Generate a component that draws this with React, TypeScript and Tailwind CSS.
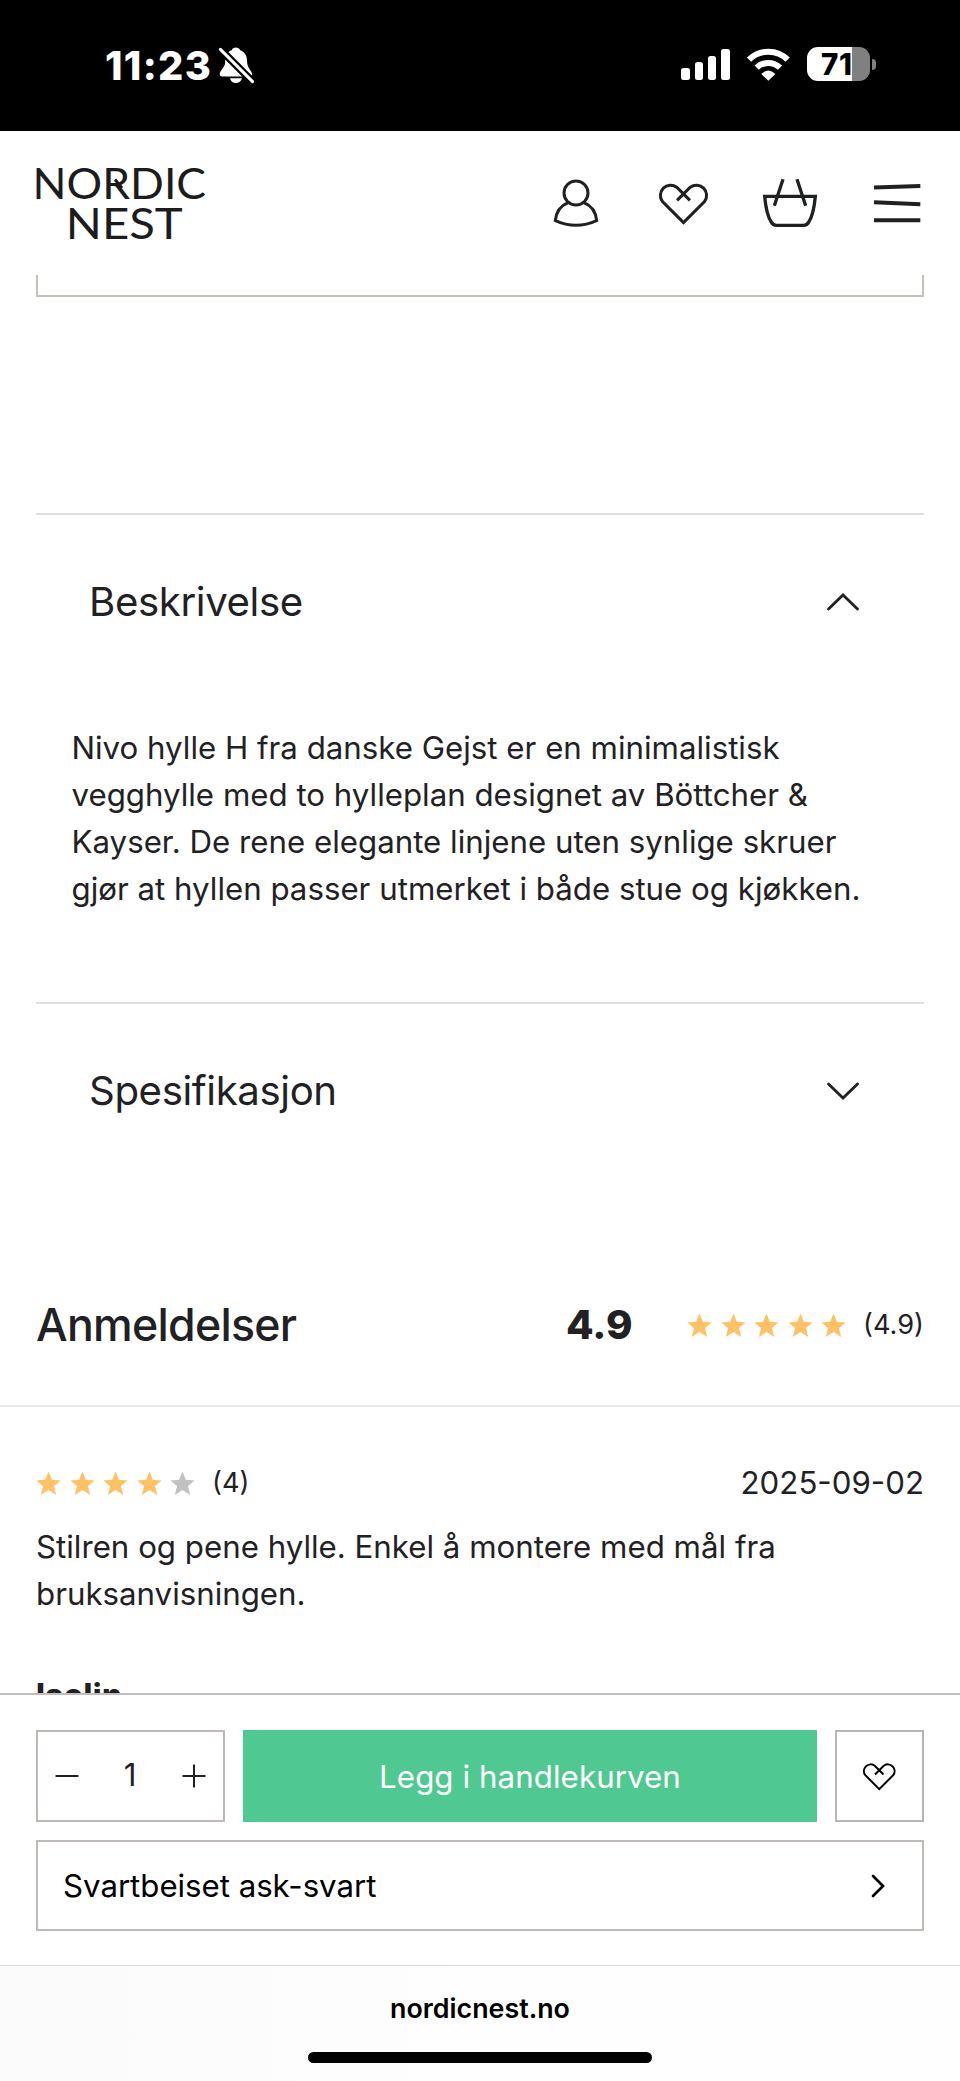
const stroke = {
  fill: "none",
  stroke: "currentColor",
  strokeWidth: 8.5,
};

function HeartIcon({ className }: { className: string }) {
  return (
    <svg viewBox="0 0 162 135" className={className} {...stroke} strokeWidth={9}>
      <path d="M100 60 61 21A30 30 0 0 0 19 63L81 125 143 63A30 30 0 0 0 101 21L62 60" />
    </svg>
  );
}

function Stars({ filled }: { filled: number }) {
  return (
    <div className="flex gap-[8.5px]">
      {[1, 2, 3, 4, 5].map((n) => (
        <svg
          key={n}
          viewBox="0 0 25 24.5"
          className={n <= filled ? "w-[25px] h-[24.5px] text-[#ffc166]" : "w-[25px] h-[24.5px] text-[#c1c1c1]"}
        >
          <path
            fill="currentColor"
            d="M12.5 .4 15.8 8.8 24.7 9.4 17.9 15.1 20.2 24 12.5 19.1 4.8 24 7.1 15.1 .3 9.4 9.2 8.8Z"
          />
        </svg>
      ))}
    </div>
  );
}

function StatusBar() {
  const bars = ["h-[12px]", "h-[18px]", "h-[24px]", "h-[31px]"];

  return (
    <div className="h-[131px] shrink-0 bg-black text-white flex items-start justify-between pl-[105px] pr-[84px]">
      <div className="flex items-center pt-[45px]">
        <span className="text-[39.8px] leading-[39px] font-extrabold tracking-[1.3px] pt-px">11:23</span>
        <svg viewBox="0 0 112 117" className="w-[38.3px] h-[40px] ml-[5px]">
          <path
            fill="currentColor"
            d="M55 7C50 7 44 10 43 15 28 20 24 34 24 50 24 66 8 74 8 86Q8 92 15 92H96Q103 92 103 86C103 76 88 68 88 48 88 32 82 20 68 15 66 10 60 7 55 7ZM38 97H73C71 106 64 111 55 111 46 111 40 106 38 97Z"
          />
          <path d="M8 11 108 111" stroke="#000" strokeWidth="22" />
          <path d="M10 13 104 107" stroke="currentColor" strokeWidth="9" strokeLinecap="round" />
        </svg>
      </div>
      <div className="flex items-center h-[34px] mt-[47px]">
        <div className="flex items-end gap-[5px] h-[31px] mr-[15px]">
          {bars.map((h) => (
            <span key={h} className={`w-[8.4px] rounded-[2.5px] bg-white ${h}`} />
          ))}
        </div>
        <svg viewBox="0 0 140 104" className="w-[46.7px] h-[34.7px] mr-[15px]" fill="none">
          <g stroke="currentColor" strokeWidth="18">
            <path d="M12 38A82 82 0 0 1 128 38" />
            <path d="M35 62A50 50 0 0 1 105 62" />
          </g>
          <path fill="currentColor" d="M49 81Q70 60 91 81L70 101Z" />
        </svg>
        <div className="flex items-center justify-center w-[63.5px] h-[34px] rounded-[11px] bg-[linear-gradient(90deg,#fff_71%,#808080_71%)]">
          <span className="text-black text-[29.5px] leading-[34px] font-extrabold tracking-[0.5px] pr-[3px]">71</span>
        </div>
        <span className="w-[4px] h-[11px] ml-[2px] rounded-r-full bg-[#808080]" />
      </div>
    </div>
  );
}

function Header() {
  return (
    <header className="h-[144px] shrink-0 bg-white flex items-start justify-between pl-[20px] pr-[38px]">
      <svg viewBox="20 150 200 100" className="w-[200px] h-[100px] mt-[19px] overflow-visible" fill="#1c1c1e">
        <g fontFamily="Lato" fontSize="42.5">
          <text x="32.6" y="198.6" textLength="173.5" lengthAdjust="spacingAndGlyphs">NORDIC</text>
          <text x="65.8" y="238.8" textLength="117" lengthAdjust="spacingAndGlyphs">NEST</text>
        </g>
        <path d="M115 179.5 122 188" stroke="#1c1c1e" strokeWidth="3" />
      </svg>
      <div className="flex items-center text-[#1f2022] h-[52px] mt-[46px]">
        <svg viewBox="0 0 144 153" className="w-[48px] h-[51px]" {...stroke} strokeWidth={9}>
          <circle cx="72" cy="45" r="36" />
          <path d="M48 74C24 84 12 104 10 128Q72 156 134 128C132 104 120 84 96 74" />
        </svg>
        <HeartIcon className="w-[55px] h-[46px] ml-[56px]" />
        <svg viewBox="0 0 174 156" className="w-[58px] h-[52px] ml-[50px]" {...stroke} strokeWidth={10}>
          <path d="M11 58H163C160 90 154 118 144 134Q138 145 128 145H46Q36 145 30 134C20 118 14 90 11 58Z" />
          <path d="M66 7 40 86M108 7 134 86" />
        </svg>
        <svg viewBox="0 0 150 126" className="w-[50px] h-[42px] ml-[53px]" {...stroke} strokeWidth={12}>
          <path d="M6 16.5 145 12M6 61 145 67M6 115H145" />
        </svg>
      </div>
    </header>
  );
}

function AccordionRow({ title, open }: { title: string; open?: boolean }) {
  return (
    <div className="mx-9 border-t-2 border-[#e0dfdc] h-[176px] flex items-center justify-between pl-[53px] pr-[64px]">
      <h2 className="text-[40.2px] leading-[48px] tracking-[-0.39px]">{title}</h2>
      <svg viewBox="0 0 34 20" className={open ? "w-[34px] h-5" : "w-[34px] h-5 rotate-180"} {...stroke} strokeWidth={2.8}>
        <path d="M2.5 17 17 3 31.5 17" strokeLinecap="round" />
      </svg>
    </div>
  );
}

function BuyBar() {
  return (
    <div className="h-[272px] shrink-0 border-t-2 border-[#c2bcbc] bg-white px-9 pt-[35px]">
      <div className="flex h-[92px] gap-[18px]">
        <div className="w-[189px] border-2 border-[#bfb8b5] flex items-center justify-between px-[17px]">
          <svg viewBox="0 0 24 24" className="w-6 h-6" {...stroke} strokeWidth={2}>
            <path d="M.5 12H23.5" />
          </svg>
          <span className="text-[31.25px] leading-none pr-px">1</span>
          <svg viewBox="0 0 24 24" className="w-6 h-6" {...stroke} strokeWidth={2}>
            <path d="M.5 12H23.5M12 .5V23.5" />
          </svg>
        </div>
        <button className="flex-1 bg-[#50c892] text-white text-[31.25px] tracking-[0.08px] pt-[2px]">
          Legg i handlekurven
        </button>
        <button className="w-[89px] border-2 border-[#b8b5b5] text-black flex items-center justify-center">
          <HeartIcon className="w-[36.5px] h-[30.4px]" />
        </button>
      </div>
      <button className="w-full h-[91px] mt-[18px] border-2 border-[#c0bab6] text-black flex items-center justify-between pl-[25px] pr-[36px]">
        <span className="text-[31.25px] tracking-[-0.04px] pt-[2px]">Svartbeiset ask-svart</span>
        <svg viewBox="0 0 16 26" className="w-4 h-[26px]" {...stroke} strokeWidth={2.7}>
          <path d="M3 3 13 13 3 23" strokeLinecap="round" />
        </svg>
      </button>
    </div>
  );
}

export default function App() {
  return (
    <div className="w-[960px] h-[2081px] overflow-hidden flex flex-col bg-white text-[#1f2124] font-['Inter',sans-serif]">
      <StatusBar />
      <Header />

      <main className="flex-1 min-h-0 overflow-hidden">
        <div className="mx-9 h-[22px] border-2 border-t-0 border-[#c4c1b9]" />

        <div className="mt-[216px]">
          <AccordionRow title="Beskrivelse" open />
          <p className="mt-[36px] px-[71.5px] h-[277px] text-[31.25px] leading-[47px] whitespace-nowrap">
            Nivo hylle H fra danske Gejst er en minimalistisk
            <br />
            vegghylle med to hylleplan designet av Böttcher &amp;
            <br />
            Kayser. De rene elegante linjene uten synlige skruer
            <br />
            gjør at hyllen passer utmerket i både stue og kjøkken.
          </p>
          <AccordionRow title="Spesifikasjon" />
        </div>

        <div className="mt-[67px] h-[162px] border-b-2 border-[#e8e8e8] flex items-center pl-9 pr-[36px]">
          <h2 className="text-[44.65px] font-medium tracking-[-0.72px]">Anmeldelser</h2>
          <span className="ml-auto mr-[54.5px] text-[40.2px] font-extrabold pt-px">4.9</span>
          <Stars filled={5} />
          <span className="ml-[17px] text-[27.2px] pt-px">(4.9)</span>
        </div>

        <article className="px-9 pt-[52px]">
          <div className="flex items-center h-[48px]">
            <Stars filled={4} />
            <span className="ml-[17px] text-[27.2px] pt-px">(4)</span>
            <time className="ml-auto text-[31.25px]">2025-09-02</time>
          </div>
          <p className="mt-[17px] text-[31.25px] leading-[47px] whitespace-nowrap">
            Stilren og pene hylle. Enkel å montere med mål fra
            <br />
            bruksanvisningen.
          </p>
          <p className="mt-[54px] text-[31.25px] leading-[47px] font-extrabold tracking-[0.4px]">Isolin</p>
        </article>
      </main>

      <BuyBar />

      <footer className="h-[116px] shrink-0 border-t border-[#d9d9d9] bg-[linear-gradient(90deg,#fbfbfc,#fefefe_50%)] text-black flex flex-col items-center">
        <span className="mt-[25px] text-[26.8px] leading-[34px] font-semibold">nordicnest.no</span>
        <span className="mt-[27px] w-[344px] h-[11px] rounded-full bg-black" />
      </footer>
    </div>
  );
}
